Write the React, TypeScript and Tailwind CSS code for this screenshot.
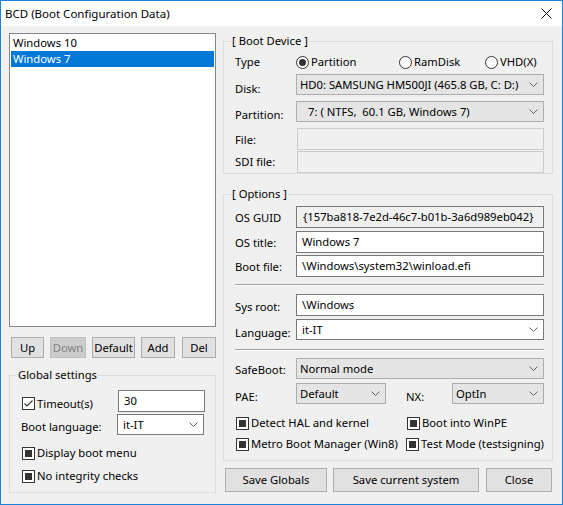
import React from "react";

const Chevron = () => (
  <svg width="9" height="5" viewBox="0 0 9 5" className="shrink-0">
    <path d="M0.5 0.5 L4.5 4.5 L8.5 0.5" fill="none" stroke="#606060" strokeWidth="1" />
  </svg>
);

function Combo({ text, white, className }: { text: string; white?: boolean; className: string }) {
  return (
    <div
      className={
        (white ? "bg-white border-[#7a7a7a] pl-[5px] " : "bg-[#e5e5e5] border-[#adadad] pl-[3px] ") +
        "border flex items-center justify-between pr-[5px] " +
        className
      }
    >
      <span className="whitespace-pre">{text}</span>
      <Chevron />
    </div>
  );
}

function TextBox({ text, className }: { text?: string; className: string }) {
  return (
    <div className={"border flex items-center pl-[5px] whitespace-nowrap " + className}>
      {text}
    </div>
  );
}

function Radio({ checked, label, className }: { checked?: boolean; label: string; className?: string }) {
  return (
    <div className={"flex items-center " + (className ?? "")}>
      <svg width="13" height="13" viewBox="0 0 13 13" className="shrink-0">
        <circle cx="6.5" cy="6.5" r="6" fill="white" stroke="#333333" strokeWidth="1" />
        {checked && <circle cx="6.5" cy="6.5" r="3.5" fill="#333333" />}
      </svg>
      <span className="ml-[2px]">{label}</span>
    </div>
  );
}

function Check({ kind, label, className }: { kind: "check" | "fill"; label: string; className?: string }) {
  return (
    <div className={"flex items-center " + (className ?? "")}>
      <svg width="13" height="13" viewBox="0 0 13 13" className="shrink-0">
        <rect x="0.5" y="0.5" width="12" height="12" fill="white" stroke="#333333" strokeWidth="1" />
        {kind === "fill" ? (
          <rect x="3" y="3" width="7" height="7" fill="#333333" />
        ) : (
          <path d="M2.5 6.5 L5 9 L10.5 3.5" fill="none" stroke="#333333" strokeWidth="1.2" />
        )}
      </svg>
      <span className="ml-[2px] whitespace-nowrap">{label}</span>
    </div>
  );
}

function Btn({ label, className, disabled }: { label: string; className: string; disabled?: boolean }) {
  return (
    <div
      className={
        (disabled
          ? "bg-[#cccccc] border-[#bfbfbf] text-[#838383] "
          : "bg-[#e1e1e1] border-[#adadad] text-black ") +
        "border flex items-center justify-center whitespace-nowrap " +
        className
      }
    >
      {label}
    </div>
  );
}

function Group({ label, className, children }: { label: string; className: string; children: React.ReactNode }) {
  return (
    <div className={"relative border border-[#dcdcdc] " + className}>
      <span className="absolute left-[7px] -top-[9px] bg-[#f0f0f0] px-[1px] leading-[16px] whitespace-nowrap">
        {label}
      </span>
      {children}
    </div>
  );
}

export default function App() {
  return (
    <div className="w-[563px] h-[505px] border border-[#1883d7] bg-[#f0f0f0] flex flex-col font-['Noto_Sans',sans-serif] text-[11.25px] leading-[16px] text-black">
      {/* title bar */}
      <div className="h-[25px] bg-white flex items-center justify-between pl-[4px] pr-[10px] shrink-0 text-[11.5px]">
        <span>BCD (Boot Configuration Data)</span>
        <svg width="11" height="11" viewBox="0 0 11 11">
          <path d="M0.5 0.5 L10.5 10.5 M10.5 0.5 L0.5 10.5" stroke="#000" strokeWidth="1" />
        </svg>
      </div>

      <div className="flex pl-[8px] pt-[7px] gap-[7px]">
        {/* left column */}
        <div className="w-[207px] flex flex-col">
          <div className="h-[294px] border border-[#828790] bg-white p-[1px]">
            <div className="h-[16px] px-[2px] flex items-center">Windows 10</div>
            <div className="h-[16px] px-[2px] flex items-center bg-[#0078d7] text-white">Windows 7</div>
          </div>
          <div className="flex mt-[10px] h-[21px]">
            <Btn label="Up" className="ml-[2px] w-[33px]" />
            <Btn label="Down" disabled className="ml-[6px] w-[36px]" />
            <Btn label="Default" className="ml-[6px] w-[43px]" />
            <Btn label="Add" className="ml-[6px] w-[34px]" />
            <Btn label="Del" className="ml-[7px] w-[34px]" />
          </div>
          <Group label="Global settings" className="mt-[17px] h-[118px] pl-[12px] pt-[14px]">
            <div className="flex items-center h-[22px]">
              <Check kind="check" label="Timeout(s)" className="w-[96px] mt-[5px]" />
              <TextBox text="30" className="w-[87px] h-[22px] bg-white border-[#7a7a7a]" />
            </div>
            <div className="flex items-center h-[21px] mt-[2px]">
              <span className="w-[96px] -ml-[1px] mt-[4px]">Boot language:</span>
              <Combo text="it-IT" white className="w-[87px] h-[21px] -ml-[0px] pl-[1px]" />
            </div>
            <Check kind="fill" label="Display boot menu" className="mt-[10px]" />
            <Check kind="fill" label="No integrity checks" className="mt-[7px]" />
          </Group>
        </div>

        {/* right column */}
        <div className="w-[330px] flex flex-col">
          <Group label="[ Boot Device ]" className="mt-[8px] h-[133px] pl-[11px] pt-[9px]">
            <div className="flex items-center h-[22px]">
              <span className="w-[61px]">Type</span>
              <Radio checked label="Partition" className="w-[104px] -ml-[0px]" />
              <Radio label="RamDisk" className="w-[86px] ml-[-1px]" />
              <Radio label="VHD(X)" />
            </div>
            <div className="flex items-start mt-[1px]">
              <span className="w-[61px] pt-[7px]">Disk:</span>
              <Combo text="HD0: SAMSUNG HM500JI (465.8 GB, C: D:)" className="w-[248px] h-[21px]" />
            </div>
            <div className="flex items-start mt-[4px]">
              <span className="w-[61px] pt-[6px]">Partition:</span>
              <Combo text="7: ( NTFS,  60.1 GB, Windows 7)" className="w-[248px] h-[21px] pl-[11px]" />
            </div>
            <div className="flex items-center mt-[5px]">
              <span className="w-[61px] pt-[1px]">File:</span>
              <TextBox className="w-[247px] h-[22px] ml-[1px] bg-[#f0f0f0] border-[#cccccc]" />
            </div>
            <div className="flex items-center mt-[1px]">
              <span className="w-[61px]">SDI file:</span>
              <TextBox className="w-[247px] h-[22px] ml-[1px] bg-[#f0f0f0] border-[#cccccc]" />
            </div>
          </Group>

          <Group label="[ Options ]" className="mt-[20px] h-[267px] pl-[11px] pt-[11px] pr-[8px]">
            <div className="flex items-center">
              <span className="w-[61px] pt-[2px]">OS GUID</span>
              <TextBox
                text="{157ba818-7e2d-46c7-b01b-3a6d989eb042}"
                className="w-[248px] h-[22px] bg-[#f0f0f0] border-[#7a7a7a] pl-[6px]"
              />
            </div>
            <div className="flex items-center mt-[3px]">
              <span className="w-[61px] pt-[2px]">OS title:</span>
              <TextBox text="Windows 7" className="w-[248px] h-[22px] bg-white border-[#7a7a7a]" />
            </div>
            <div className="flex items-center mt-[2px]">
              <span className="w-[61px] pt-[2px]">Boot file:</span>
              <TextBox text="\Windows\system32\winload.efi" className="w-[248px] h-[22px] bg-white border-[#7a7a7a]" />
            </div>
            <div className="mt-[7px] border-t border-t-[#a0a0a0] border-b border-b-white" />
            <div className="flex items-center mt-[8px]">
              <span className="w-[61px] pt-[3px]">Sys root:</span>
              <TextBox text="\Windows" className="w-[248px] h-[22px] bg-white border-[#7a7a7a]" />
            </div>
            <div className="flex items-start mt-[3px]">
              <span className="w-[61px] pt-[6px]">Language:</span>
              <Combo text="it-IT" white className="w-[248px] h-[21px]" />
            </div>
            <div className="mt-[8px] border-t border-t-[#a0a0a0] border-b border-b-white" />
            <div className="flex items-start mt-[7px]">
              <span className="w-[61px] pt-[4px]">SafeBoot:</span>
              <Combo text="Normal mode" className="w-[248px] h-[21px]" />
            </div>
            <div className="flex items-start mt-[4px]">
              <span className="w-[61px] pt-[6px]">PAE:</span>
              <Combo text="Default" className="w-[90px] h-[21px]" />
              <span className="w-[46px] ml-[20px] pt-[6px]">NX:</span>
              <Combo text="OptIn" className="w-[92px] h-[21px]" />
            </div>
            <div className="flex items-center mt-[10px]">
              <Check kind="fill" label="Detect HAL and kernel" className="w-[171px] ml-[1px]" />
              <Check kind="fill" label="Boot into WinPE" />
            </div>
            <div className="flex items-center mt-[5px]">
              <Check kind="fill" label="Metro Boot Manager (Win8)" className="w-[171px] ml-[1px]" />
              <Check kind="fill" label="Test Mode (testsigning)" />
            </div>
          </Group>

          <div className="flex mt-[7px] h-[24px]">
            <Btn label="Save Globals" className="ml-[2px] w-[102px]" />
            <Btn label="Save current system" className="ml-[6px] w-[146px]" />
            <Btn label="Close" className="ml-[7px] w-[66px]" />
          </div>
        </div>
      </div>
    </div>
  );
}
